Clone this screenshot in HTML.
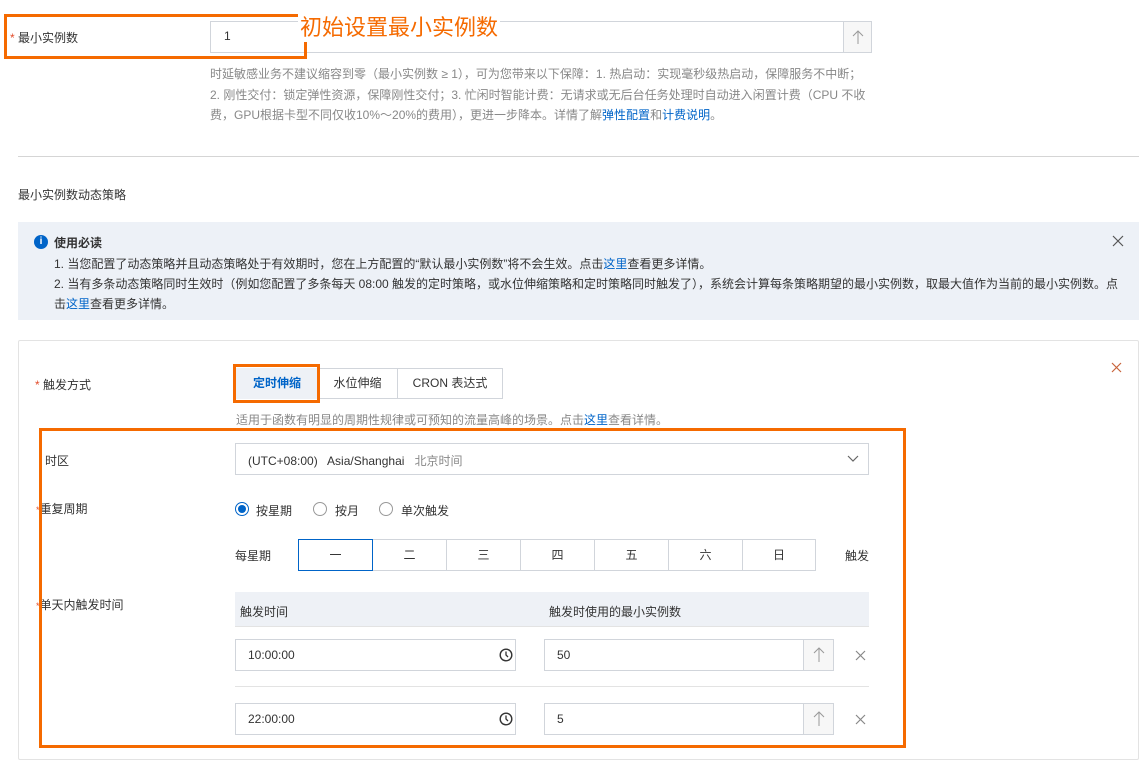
<!DOCTYPE html>
<html><head><meta charset="utf-8"><style>
*{box-sizing:border-box;margin:0;padding:0}
body{width:1145px;height:748px;background:#fff;position:relative;overflow:hidden;font-family:"Liberation Sans","Noto Sans CJK SC",sans-serif;font-size:12px;color:#333}
.a{position:absolute;white-space:nowrap}
.inp{position:absolute;border:1px solid #d1d5db;background:#fff}
.star{color:#e34d2c}
.blue{color:#0064c8}
.ob{position:absolute;border:3px solid #f56a00}
.day{position:absolute;top:539px;height:32px;border:1px solid #d1d5db;text-align:center;line-height:30px;font-size:12px}
.x{position:absolute;font-size:16px;color:#666}
.up{position:absolute;border-left:1px solid #d1d5db;background:#f7f7f7}
</style></head><body>
<div class="a" style="left:10px;top:29px"><span class="star">*</span> 最小实例数</div>
<div class="inp" style="left:210px;top:21px;width:662px;height:32px"></div>
<div class="a" style="left:224px;top:29px">1</div>
<div class="up" style="left:843px;top:22px;width:28px;height:30px"><svg width="28" height="30"><path d="M14 9v13M9 14l5-5 5 5" stroke="#999" fill="none" stroke-width="1"/></svg></div>
<div class="ob" style="left:4px;top:14px;width:303px;height:45px;border-top:none"></div>
<div class="ob" style="left:4px;top:14px;width:294px;height:3px;border-width:3px 0 0 0"></div>
<div class="a" style="left:298px;top:10px;font-size:22px;color:#f56a00;background:#fff;padding:0 2px">初始设置最小实例数</div>
<div class="a" style="left:210px;top:64px;color:#888;line-height:20.5px;white-space:normal;width:660px">时延敏感业务不建议缩容到零（最小实例数 ≥ 1），可为您带来以下保障：1. 热启动：实现毫秒级热启动，保障服务不中断；2. 刚性交付：锁定弹性资源，保障刚性交付；3. 忙闲时智能计费：无请求或无后台任务处理时自动进入闲置计费（CPU 不收费，GPU根据卡型不同仅收10%～20%的费用），更进一步降本。详情了解<span class="blue">弹性配置</span>和<span class="blue">计费说明</span>。</div>
<div class="a" style="left:18px;top:156px;width:1121px;height:1px;background:#d5d5d5"></div>
<div class="a" style="left:18px;top:186px">最小实例数动态策略</div>
<div class="a" style="left:18px;top:222px;width:1121px;height:98px;background:#edf1f7"></div>
<div class="a" style="left:34px;top:235px;width:14px;height:14px;border-radius:7px;background:#0064c8;color:#fff;font-size:10px;font-weight:bold;text-align:center;line-height:14px">i</div>
<div class="a" style="left:54px;top:234px;font-weight:bold">使用必读</div>
<div class="a" style="left:54px;top:255px">1. 当您配置了动态策略并且动态策略处于有效期时，您在上方配置的“默认最小实例数”将不会生效。点击<span class="blue">这里</span>查看更多详情。</div>
<div class="a" style="left:54px;top:274px;white-space:normal;width:1075px;line-height:20px">2. 当有多条动态策略同时生效时（例如您配置了多条每天 08:00 触发的定时策略，或水位伸缩策略和定时策略同时触发了），系统会计算每条策略期望的最小实例数，取最大值作为当前的最小实例数。点击<span class="blue">这里</span>查看更多详情。</div>
<div class="a" style="left:1112px;top:235px"><svg width="12" height="12"><path d="M1 1l10 10M11 1L1 11" stroke="#555" stroke-width="1.2"/></svg></div>
<div class="a" style="left:18px;top:340px;width:1121px;height:420px;border:1px solid #e3e3e3;border-radius:2px"></div>
<div class="a" style="left:1111px;top:362px"><svg width="11" height="11"><path d="M1 1l9 9M10 1L1 10" stroke="#c8643c" stroke-width="1.2"/></svg></div>
<div class="a" style="left:35px;top:376px"><span class="star">*</span> 触发方式</div>
<div class="a" style="left:236px;top:368px;width:267px;height:31px;border:1px solid #d1d5db"></div>
<div class="a" style="left:236px;top:368px;width:82px;height:31px;background:#eef1f6;color:#0064c8;font-weight:bold;text-align:center;line-height:31px">定时伸缩</div>
<div class="a" style="left:318px;top:368px;width:80px;height:31px;border-right:1px solid #d1d5db;text-align:center;line-height:31px">水位伸缩</div>
<div class="a" style="left:398px;top:368px;width:104px;height:31px;text-align:center;line-height:31px">CRON 表达式</div>
<div class="ob" style="left:233px;top:364px;width:87px;height:39px"></div>
<div class="a" style="left:236px;top:411px;color:#888">适用于函数有明显的周期性规律或可预知的流量高峰的场景。点击<span class="blue">这里</span>查看详情。</div>
<div class="a" style="left:45px;top:452px">时区</div>
<div class="inp" style="left:235px;top:443px;width:634px;height:32px"></div>
<div class="a" style="left:248px;top:452px">(UTC+08:00)&nbsp;&nbsp; Asia/Shanghai&nbsp;&nbsp; <span style="color:#888">北京时间</span></div>
<div class="a" style="left:846px;top:453px"><svg width="14" height="10"><path d="M2 2l5 5 5-5" stroke="#666" fill="none" stroke-width="1.2"/></svg></div>
<div class="a" style="left:36px;top:500px"><span class="star" style="font-size:9px">*</span>重复周期</div>
<div class="a" style="left:235px;top:502px;width:14px;height:14px;border:1px solid #0064c8;border-radius:50%"><div style="margin:2px;width:8px;height:8px;border-radius:50%;background:#0064c8"></div></div>
<div class="a" style="left:256px;top:502px">按星期</div>
<div class="a" style="left:313px;top:502px;width:14px;height:14px;border:1px solid #999;border-radius:50%"></div>
<div class="a" style="left:335px;top:502px">按月</div>
<div class="a" style="left:379px;top:502px;width:14px;height:14px;border:1px solid #999;border-radius:50%"></div>
<div class="a" style="left:401px;top:502px">单次触发</div>
<div class="a" style="left:235px;top:547px">每星期</div>
<div class="day" style="left:298px;width:75px;border-color:#0064c8;z-index:2">一</div>
<div class="day" style="left:372px;width:75px">二</div>
<div class="day" style="left:446px;width:75px">三</div>
<div class="day" style="left:520px;width:75px">四</div>
<div class="day" style="left:594px;width:75px">五</div>
<div class="day" style="left:668px;width:75px">六</div>
<div class="day" style="left:742px;width:74px">日</div>
<div class="a" style="left:845px;top:547px">触发</div>
<div class="a" style="left:36px;top:596px"><span class="star" style="font-size:9px">*</span>单天内触发时间</div>
<div class="a" style="left:235px;top:592px;width:634px;height:35px;background:#eef1f6;border-bottom:1px solid #e3e3e3"></div>
<div class="a" style="left:240px;top:603px">触发时间</div>
<div class="a" style="left:549px;top:603px">触发时使用的最小实例数</div>

<div class="inp" style="left:235px;top:639px;width:281px;height:32px"></div>
<div class="a" style="left:248px;top:648px">10:00:00</div>
<div class="a" style="left:499px;top:648px"><svg width="14" height="14"><circle cx="7" cy="7" r="5.8" stroke="#333" stroke-width="1.4" fill="none"/><path d="M7 3.5V7l2 2" stroke="#333" stroke-width="1.3" fill="none"/></svg></div>
<div class="inp" style="left:544px;top:639px;width:290px;height:32px"></div>
<div class="a" style="left:557px;top:648px">50</div>
<div class="up" style="left:803px;top:640px;width:30px;height:30px"><svg width="30" height="30"><path d="M15 8v14M10 13l5-5 5 5" stroke="#999" fill="none"/></svg></div>
<div class="a" style="left:855px;top:650px"><svg width="11" height="11"><path d="M1 1l9 9M10 1L1 10" stroke="#888" stroke-width="1.2"/></svg></div>
<div class="a" style="left:235px;top:686px;width:634px;height:1px;background:#e3e3e3"></div>
<div class="inp" style="left:235px;top:703px;width:281px;height:32px"></div>
<div class="a" style="left:248px;top:712px">22:00:00</div>
<div class="a" style="left:499px;top:712px"><svg width="14" height="14"><circle cx="7" cy="7" r="5.8" stroke="#333" stroke-width="1.4" fill="none"/><path d="M7 3.5V7l2 2" stroke="#333" stroke-width="1.3" fill="none"/></svg></div>
<div class="inp" style="left:544px;top:703px;width:290px;height:32px"></div>
<div class="a" style="left:557px;top:712px">5</div>
<div class="up" style="left:803px;top:704px;width:30px;height:30px"><svg width="30" height="30"><path d="M15 8v14M10 13l5-5 5 5" stroke="#999" fill="none"/></svg></div>
<div class="a" style="left:855px;top:714px"><svg width="11" height="11"><path d="M1 1l9 9M10 1L1 10" stroke="#888" stroke-width="1.2"/></svg></div>
<div class="ob" style="left:39px;top:428px;width:867px;height:320px"></div>
</body></html>
